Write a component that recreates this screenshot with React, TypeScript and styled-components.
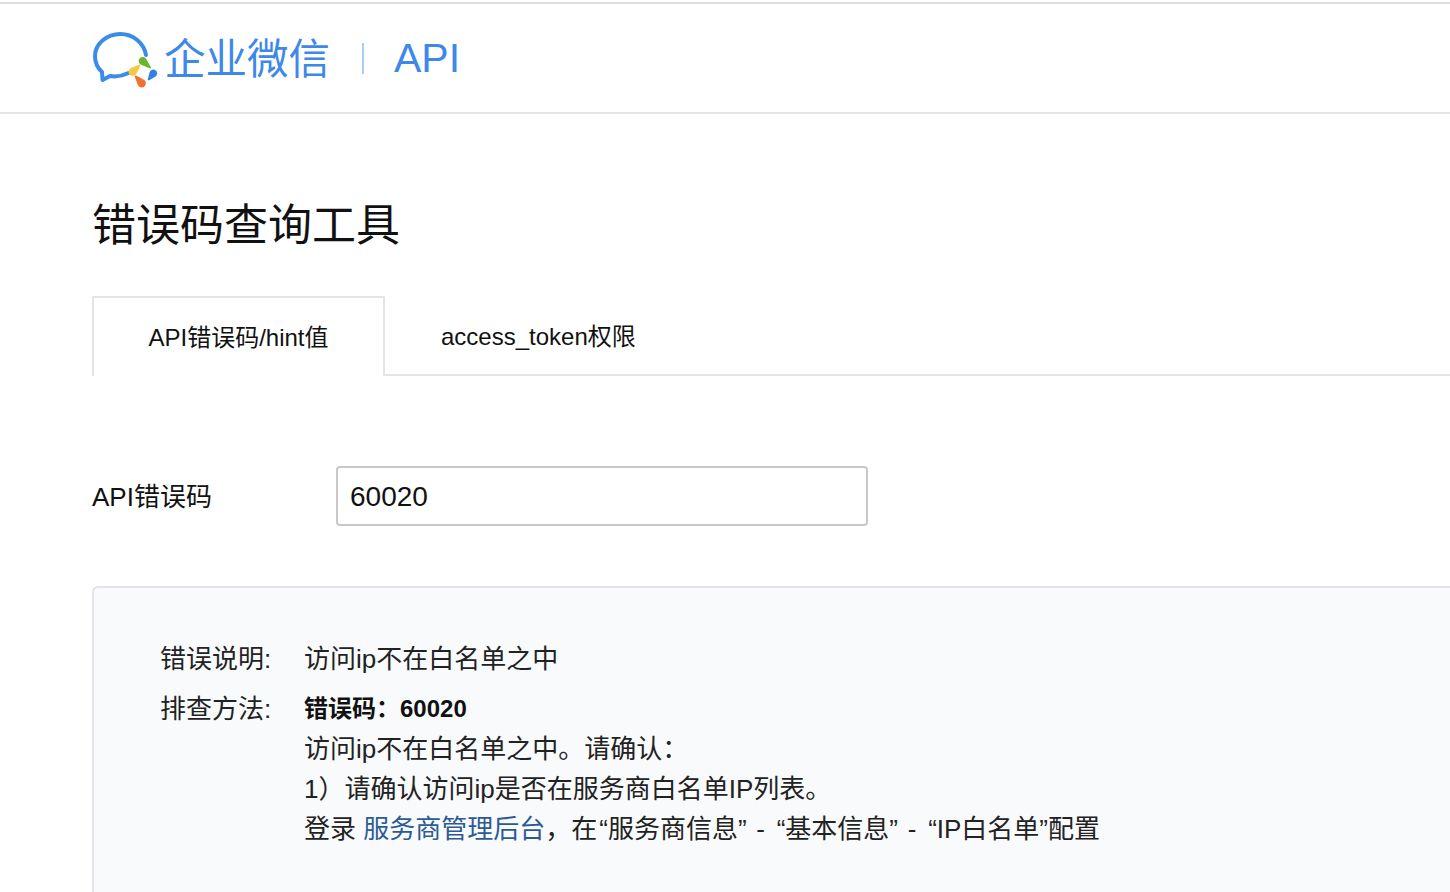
import React from "react";
import styled, { createGlobalStyle } from "styled-components";

const Global = createGlobalStyle`
  html, body { margin: 0; padding: 0; background: #fff; overflow: hidden; }
  body { font-family: "Liberation Sans", "Noto Sans CJK SC", sans-serif; color: #111; }
`;
const Page = styled.div`
  width: 1450px;
  height: 892px;
  overflow: hidden;
  display: flex;
  flex-direction: column;
`;
const Header = styled.header`
  box-sizing: border-box;
  height: 112px;
  margin-top: 2px;
  border-top: 2px solid #dfdfdf;
  border-bottom: 2px solid #e3e4e8;
  padding-left: 92px;
  display: flex;
  align-items: center;
  flex-shrink: 0;
`;
const Logo = styled.svg`
  width: 66px;
  height: 60px;
  flex-shrink: 0;
`;
const Brand = styled.span`
  font-size: 41.5px;
  line-height: 50px;
  color: #3d88e8;
  margin-left: 6px;
  padding-top: 3px;
  white-space: nowrap;
`;
const Divider = styled.span`
  width: 2px;
  height: 31px;
  background: #a9cdf3;
  margin-left: 32px;
  margin-right: 30px;
`;
const ApiWord = styled.span`
  font-size: 41px;
  line-height: 50px;
  color: #3d88e8;
`;
const Main = styled.main`
  padding: 82px 0 0 92px;
`;
const Title = styled.h1`
  margin: 0;
  font-size: 44px;
  line-height: 60px;
  font-weight: 400;
  color: #111;
`;
const Tabs = styled.div`
  box-sizing: border-box;
  display: flex;
  margin-top: 40px;
  height: 80px;
  border-bottom: 2px solid #e3e4e8;
`;
const Tab = styled.div<{ $active?: boolean }>`
  box-sizing: border-box;
  height: 80px;
  font-size: 24px;
  line-height: 80px;
  color: #111;
  white-space: nowrap;
  background: #fff;
  border-top: 2px solid ${(p) => (p.$active ? "#e3e4e8" : "transparent")};
  ${(p) =>
    p.$active
      ? `width: 293px;
         text-align: center;
         border-left: 2px solid #e3e4e8;
         border-right: 2px solid #e3e4e8;
         border-radius: 2px 2px 0 0;`
      : `padding-left: 56px;
         height: 78px;
         line-height: 78px;`}
`;
const FormRow = styled.div`
  display: flex;
  align-items: center;
  margin-top: 90px;
`;
const Label = styled.label`
  width: 244px;
  font-size: 26px;
  color: #111;
  padding-bottom: 4px;
`;
const Field = styled.input`
  box-sizing: border-box;
  width: 532px;
  height: 60px;
  border: 2px solid #c8c8c8;
  border-radius: 4px;
  padding: 2px 12px 0;
  font-family: inherit;
  font-size: 28px;
  color: #111;
  outline: none;
  background: #fff;
`;
const Result = styled.section`
  box-sizing: border-box;
  margin-top: 60px;
  height: 400px;
  background: #f9fafc;
  border: 2px solid #e3e4e8;
  border-right: none;
  border-radius: 6px 0 0 0;
  padding: 51px 0 0 66px;
`;
const ResultRow = styled.div`
  display: flex;
  font-size: 26px;
  line-height: 40px;
  color: #222;
  & + & { margin-top: 10px; }
`;
const RowName = styled.div`
  width: 144px;
  flex-shrink: 0;
`;
const Strong = styled.div`
  font-size: 24px;
  font-weight: 700;
  color: #111;
`;
const DocLink = styled.a`
  color: #2c5b94;
  text-decoration: none;
`;
const Quoted = styled.span`
  padding-left: 2px;
`;
const Sep = styled.span`
  padding: 0 2.5px;
`;

type PetalProps = { x: number; y: number; angle: number; len: number; r: number; color: string };
function Petal({ x, y, angle, len, r, color }: PetalProps) {
  const sx = r * 0.3;
  const sy = r * 0.954;
  return (
    <path
      d={`M${len} 0.7 L${len} -0.7 L${sx} ${-sy} A${r} ${r} 0 1 0 ${sx} ${sy} Z`}
      fill={color}
      transform={`translate(${x} ${y}) rotate(${angle})`}
    />
  );
}

export default function App() {
  return (
    <Page>
      <Global />
      <Header>
        <Logo viewBox="0 1 66 60" aria-hidden="true">
          <path
            d="M54 28C52 16 41 7 28.500 7 14.500 7 3 17 3 29c0 7 2.500 12 7 16l.5 8 7.500-4c6 1 12.500 0 18.500-3"
            fill="none"
            stroke="#3b8be8"
            strokeWidth="4"
            strokeLinecap="round"
            strokeLinejoin="round"
          />
          <Petal x={50.7} y={34} angle={42} len={10.6} r={4} color="#6bb52f" />
          <Petal x={61.3} y={46.3} angle={127} len={8.5} r={3.8} color="#2f82e8" />
          <Petal x={49.7} y={56.3} angle={229} len={10} r={4.2} color="#ef7230" />
          <Petal x={40.7} y={44.7} angle={-42.5} len={10} r={4.2} color="#f7c93f" />
        </Logo>
        <Brand>企业微信</Brand>
        <Divider />
        <ApiWord>API</ApiWord>
      </Header>
      <Main>
        <Title>错误码查询工具</Title>
        <Tabs>
          <Tab $active>API错误码/hint值</Tab>
          <Tab>access_token权限</Tab>
        </Tabs>
        <FormRow>
          <Label>API错误码</Label>
          <Field readOnly value="60020" />
        </FormRow>
        <Result>
          <ResultRow>
            <RowName>错误说明:</RowName>
            <div>访问ip不在白名单之中</div>
          </ResultRow>
          <ResultRow>
            <RowName>排查方法:</RowName>
            <div>
              <Strong>错误码：60020</Strong>
              <div>访问ip不在白名单之中。请确认：</div>
              <div>1）请确认访问ip是否在服务商白名单IP列表。</div>
              <div>
                登录 <DocLink href="#">服务商管理后台</DocLink>，在<Quoted>“服务商信息”</Quoted>
                <Sep> - </Sep>
                <Quoted>“基本信息”</Quoted>
                <Sep> - </Sep>
                <Quoted>“IP白名单”</Quoted>配置
              </div>
            </div>
          </ResultRow>
        </Result>
      </Main>
    </Page>
  );
}
